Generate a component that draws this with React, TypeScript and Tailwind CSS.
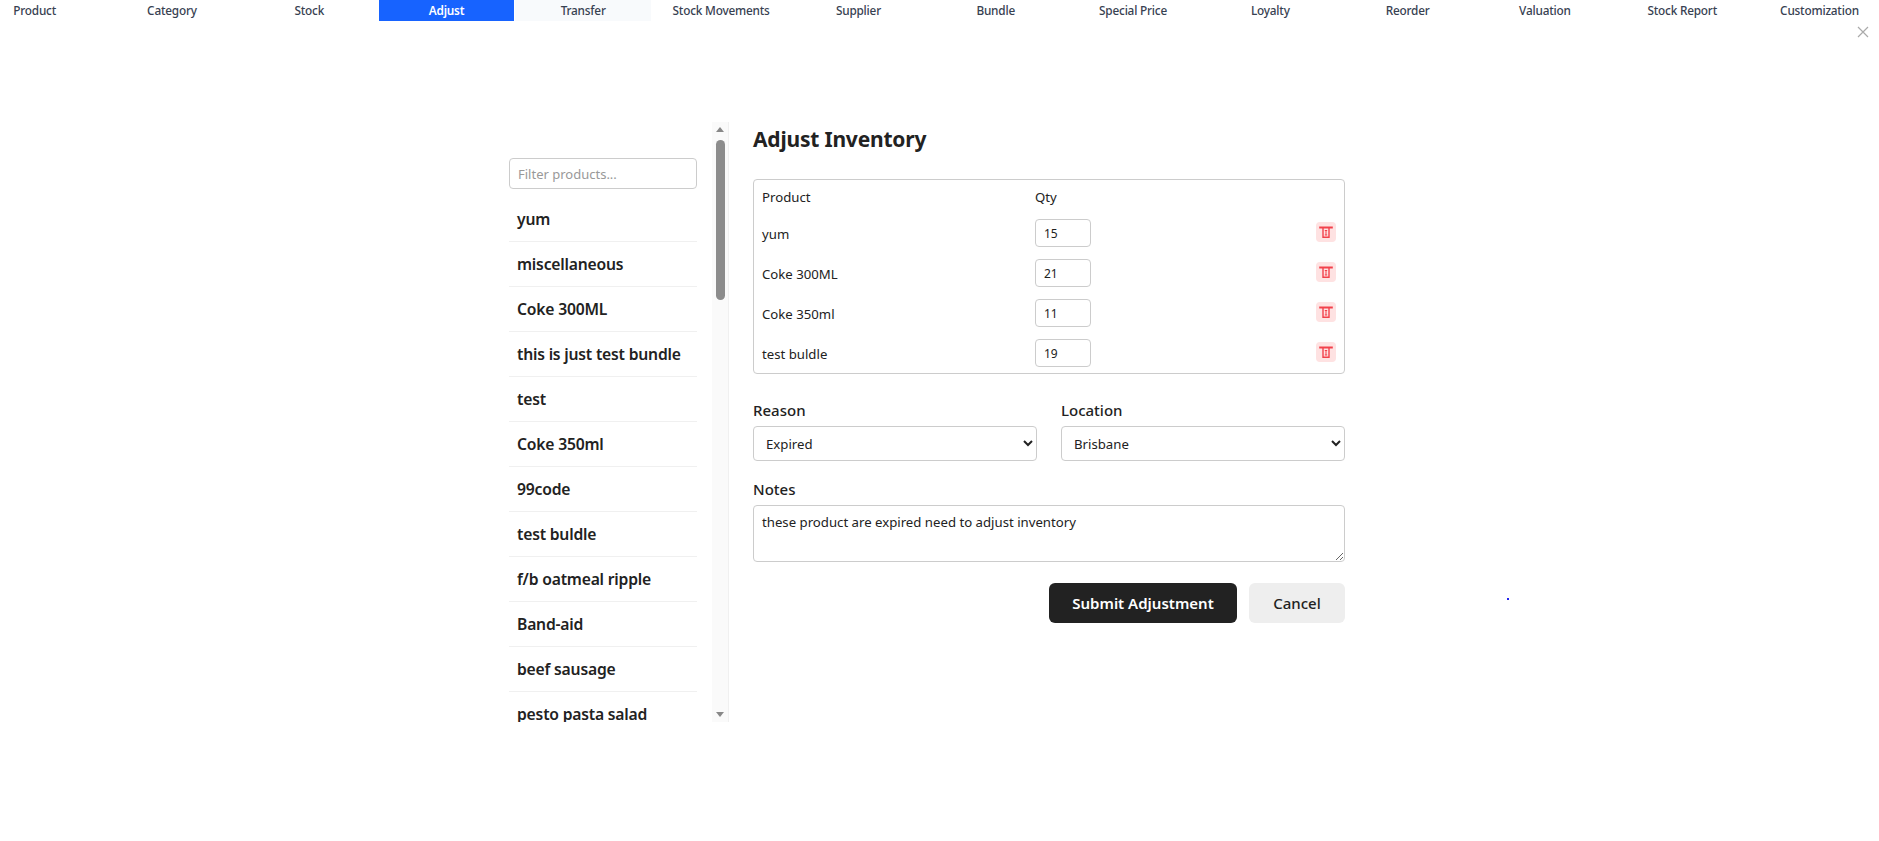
import { useState } from "react";

const tabs = [
  "Product",
  "Category",
  "Stock",
  "Adjust",
  "Transfer",
  "Stock Movements",
  "Supplier",
  "Bundle",
  "Special Price",
  "Loyalty",
  "Reorder",
  "Valuation",
  "Stock Report",
  "Customization",
];

const products = [
  "yum",
  "miscellaneous",
  "Coke 300ML",
  "this is just test bundle",
  "test",
  "Coke 350ml",
  "99code",
  "test buldle",
  "f/b oatmeal ripple",
  "Band-aid",
  "beef sausage",
  "pesto pasta salad",
];

const lines = [
  { name: "yum", qty: 15 },
  { name: "Coke 300ML", qty: 21 },
  { name: "Coke 350ml", qty: 11 },
  { name: "test buldle", qty: 19 },
];

function TrashIcon() {
  return (
    <svg width="14" height="14" viewBox="0 0 14 14" fill="none" stroke="#f2414b">
      <path d="M0.2 2.5h13.6" strokeWidth="2" />
      <path d="M4 3v9.3h6V3" strokeWidth="1.4" />
      <path d="M5.8 5.5h2.4M7 5.5v4.5M5.8 10h2.4" strokeWidth="1" />
    </svg>
  );
}

export default function App() {
  const [filter, setFilter] = useState("");

  return (
    <div className="relative min-h-[841px] bg-white text-[#222] font-['Noto_Sans','Open_Sans',sans-serif] overflow-hidden">
      {/* Tab strip, scrolled a bit to the right */}
      <nav className="flex h-[21px] -ml-[34px]">
        {tabs.map((tab) => (
          <button
            key={tab}
            className={`shrink-0 text-center text-[11.8px] leading-[21px] font-medium tracking-[-0.2px] ${
              tab === "Adjust"
                ? "mx-[1.15px] w-[135px] bg-[#1763ff] text-white font-semibold"
                : tab === "Transfer"
                  ? "mr-[1.3px] w-[136px] bg-[#f8fafc] text-[#374151]"
                  : "w-[137.3px] text-[#374151]"
            }`}
          >
            {tab}
          </button>
        ))}
      </nav>

      <button className="absolute left-[1857px] top-[26px] text-[#aaa]">
        <svg width="12" height="12" viewBox="0 0 12 12" stroke="currentColor" strokeWidth="1.2">
          <path d="M1 1l10 10M11 1L1 11" />
        </svg>
      </button>

      <div className="absolute left-[1507px] top-[598px] w-[2px] h-[2px] bg-[#2222ee]" />

      <main className="flex pl-[509px] pt-[101px]">
        {/* Product list */}
        <div className="flex h-[600px] w-[220px] shrink-0 border-r border-[#f0f0f0]">
          <div className="w-[188px] shrink-0 overflow-hidden pt-[36px]">
            <input
              value={filter}
              onChange={(e) => setFilter(e.target.value)}
              placeholder="Filter products..."
              className="mb-[8px] h-[31px] w-full rounded border border-[#ccc] px-[8px] text-[13px] placeholder:text-[#999] outline-none"
            />
            {products.map((p) => (
              <div
                key={p}
                className="flex h-[45px] items-center border-b border-[#f0f0f0] pl-[8px] pt-[2px] text-[15.7px] font-semibold tracking-[-0.2px] whitespace-nowrap"
              >
                {p}
              </div>
            ))}
          </div>
          <div className="ml-[15px] flex w-[16px] shrink-0 flex-col items-center bg-[#fafafa]">
            <div className="mt-[5px] h-0 w-0 border-x-[4.5px] border-b-[5px] border-x-transparent border-b-[#888]" />
            <div className="mt-[8px] h-[160px] w-[9px] rounded-[5px] bg-[#8c8c8c]" />
            <div className="mt-auto mb-[5px] h-0 w-0 border-x-[4.5px] border-t-[5px] border-x-transparent border-t-[#888]" />
          </div>
        </div>

        {/* Adjustment form */}
        <div className="ml-[24px] w-[592px]">
          <h2 className="mt-[3px] text-[21px] leading-[28px] font-bold tracking-[-0.2px]">Adjust Inventory</h2>

          <div className="mt-[26px] h-[195px] rounded border border-[#ccc] pl-[8px] pr-[8px] text-[13.2px]">
            <div className="flex h-[33px] items-center">
              <span className="w-[273px] pt-[2px]">Product</span>
              <span className="pt-[2px]">Qty</span>
            </div>
            {lines.map((line) => (
              <div key={line.name} className="flex h-[40px] items-center">
                <span className="w-[273px] pt-[4px]">{line.name}</span>
                <input
                  defaultValue={line.qty}
                  className="h-[28px] w-[56px] rounded border border-[#ccc] px-[8px] text-[12px] outline-none"
                />
                <button className="ml-auto flex h-[20px] w-[20px] -translate-y-[1px] items-center justify-center rounded bg-[#fee2e2]">
                  <TrashIcon />
                </button>
              </div>
            ))}
          </div>

          <div className="mt-[25px] grid grid-cols-2 gap-[24px]">
            <label className="block">
              <span className="block text-[15px] leading-[22px] font-medium">Reason</span>
              <select
                defaultValue="Expired"
                className="mt-[5px] h-[35px] w-full rounded border border-[#ccc] bg-white px-[8px] text-[13.2px] outline-none"
              >
                <option>Expired</option>
                <option>Damaged</option>
              </select>
            </label>
            <label className="block">
              <span className="block text-[15px] leading-[22px] font-medium">Location</span>
              <select
                defaultValue="Brisbane"
                className="mt-[5px] h-[35px] w-full rounded border border-[#ccc] bg-white px-[8px] text-[13.2px] outline-none"
              >
                <option>Brisbane</option>
                <option>Sydney</option>
              </select>
            </label>
          </div>

          <label className="mt-[17px] block">
            <span className="block text-[15px] leading-[22px] font-medium">Notes</span>
            <textarea
              defaultValue="these product are expired need to adjust inventory"
              className="mt-[5px] block h-[57px] w-full rounded border border-[#ccc] px-[8px] py-[7px] text-[13.2px] outline-none"
            />
          </label>

          <div className="mt-[21px] flex justify-end gap-[12px]">
            <button className="h-[40px] w-[188px] rounded-md bg-[#222] text-[15px] font-semibold text-white">
              Submit Adjustment
            </button>
            <button className="h-[40px] w-[96px] rounded-md bg-[#eee] text-[15px] font-medium text-[#222]">
              Cancel
            </button>
          </div>
        </div>
      </main>
    </div>
  );
}
